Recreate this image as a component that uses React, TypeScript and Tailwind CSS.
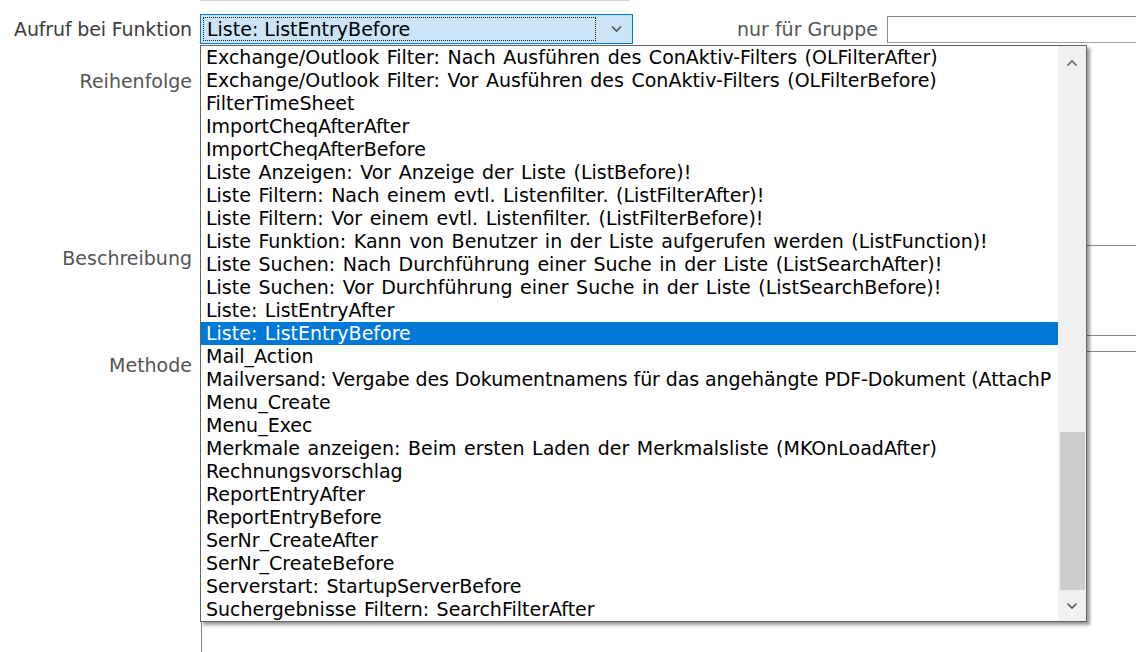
import React from 'react';

const eintraege: string[] = [
    'Exchange/Outlook Filter: Nach Ausführen des ConAktiv-Filters (OLFilterAfter)',
    'Exchange/Outlook Filter: Vor Ausführen des ConAktiv-Filters (OLFilterBefore)',
    'FilterTimeSheet',
    'ImportCheqAfterAfter',
    'ImportCheqAfterBefore',
    'Liste Anzeigen: Vor Anzeige der Liste (ListBefore)!',
    'Liste Filtern: Nach einem evtl. Listenfilter. (ListFilterAfter)!',
    'Liste Filtern: Vor einem evtl. Listenfilter. (ListFilterBefore)!',
    'Liste Funktion: Kann von Benutzer in der Liste aufgerufen werden (ListFunction)!',
    'Liste Suchen: Nach Durchführung einer Suche in der Liste (ListSearchAfter)!',
    'Liste Suchen: Vor Durchführung einer Suche in der Liste (ListSearchBefore)!',
    'Liste: ListEntryAfter',
    'Liste: ListEntryBefore',
    'Mail_Action',
    'Mailversand: Vergabe des Dokumentnamens für das angehängte PDF-Dokument (AttachP',
    'Menu_Create',
    'Menu_Exec',
    'Merkmale anzeigen: Beim ersten Laden der Merkmalsliste (MKOnLoadAfter)',
    'Rechnungsvorschlag',
    'ReportEntryAfter',
    'ReportEntryBefore',
    'SerNr_CreateAfter',
    'SerNr_CreateBefore',
    'Serverstart: StartupServerBefore',
    'Suchergebnisse Filtern: SearchFilterAfter',
];

const AUSGEWAEHLT = 'Liste: ListEntryBefore';

const Chevron = ({ up = false, className = '' }: { up?: boolean; className?: string }) => (
    <svg viewBox="0 0 12 8" className={className} fill="none" stroke="currentColor" strokeWidth="1.6">
        {up ? <path d="M1.5 6.5 L6 2 L10.5 6.5" /> : <path d="M1.5 1.5 L6 6 L10.5 1.5" />}
    </svg>
);

export default function App() {
    return (
        <div className="relative w-[1136px] h-[652px] bg-white overflow-hidden font-['DejaVu_Sans',sans-serif] text-[19px]">
            {/* Rest vom Feld darüber */}
            <div className="ml-[200px] w-[430px] border-t border-[#d6d6d6]" />

            {/* Formular */}
            <div className="grid grid-cols-[192px_1fr] gap-x-[8px]">
                {/* Aufruf bei Funktion */}
                <div className="mt-[13px] h-[30px] flex items-center justify-end text-[#3c3c3c] whitespace-nowrap tracking-[-0.15px]">Aufruf bei Funktion</div>
                <div className="mt-[13px] flex items-center">
                    <div className="w-[433px] h-[30px] border border-[#0078d7] bg-[#cce4f7] flex items-center shrink-0">
                        <div className="ml-[2px] w-[393px] h-[24px] border border-dotted border-[#222] flex items-center pl-[3px] text-black whitespace-nowrap">
                            {AUSGEWAEHLT}
                        </div>
                        <Chevron className="ml-[14px] w-[13px] h-[8px] text-[#555]" />
                    </div>
                    <span className="ml-[104px] text-[#555] whitespace-nowrap">nur für Gruppe</span>
                    <div className="ml-[9px] w-[260px] h-[27px] border border-[#a0a0a0] border-t-[#8a8a8a] border-l-[#8a8a8a] bg-white shrink-0" />
                </div>

                {/* Reihenfolge */}
                <div className="mt-[25px] h-[24px] flex items-center justify-end text-[#555]">Reihenfolge</div>
                <div className="mt-[25px] h-[24px] w-[120px] border border-[#a0a0a0]" />

                {/* Beschreibung */}
                <div className="mt-[152px] text-right text-[#555] leading-[26px]">Beschreibung</div>
                <div className="mt-[152px] ml-px h-[91px] border-y border-l border-[#8a8a8a]" />

                {/* Methode */}
                <div className="mt-[15px] text-right text-[#555] leading-[28px]">Methode</div>
                <div className="mt-[15px] ml-px h-[320px] border-t border-l border-[#8a8a8a]" />
            </div>

            {/* Aufgeklappte Auswahlliste */}
            <div className="absolute left-[200px] top-[45px] w-[887px] h-[577px] border border-[#646464] bg-white flex shadow-[3px_3px_3px_rgba(0,0,0,0.4)]">
                <ul className="flex-1 min-w-0 overflow-hidden text-black [word-spacing:1.5px]">
                    {eintraege.map(e => (
                        <li
                            key={e}
                            className={
                                e === AUSGEWAEHLT
                                    ? 'h-[23px] leading-[23px] pl-[5px] whitespace-nowrap overflow-hidden bg-[#0078d7] text-white'
                                    : e.startsWith('Mailversand')
                                      ? 'h-[23px] leading-[23px] pl-[5px] whitespace-nowrap overflow-hidden [word-spacing:0px] tracking-[-0.1px]'
                                      : 'h-[23px] leading-[23px] pl-[5px] whitespace-nowrap overflow-hidden'
                            }
                        >
                            {e}
                        </li>
                    ))}
                </ul>
                <div className="w-[28px] shrink-0 bg-[#f0f0f0] flex flex-col items-center">
                    <div className="h-[34px] flex items-center justify-center">
                        <Chevron up className="w-[12px] h-[8px] text-[#606060]" />
                    </div>
                    <div className="h-[352px]" />
                    <div className="w-[25px] h-[158px] bg-[#cdcdcd]" />
                    <div className="flex-1 flex items-center justify-center">
                        <Chevron className="w-[12px] h-[8px] text-[#606060]" />
                    </div>
                </div>
            </div>
        </div>
    );
}
